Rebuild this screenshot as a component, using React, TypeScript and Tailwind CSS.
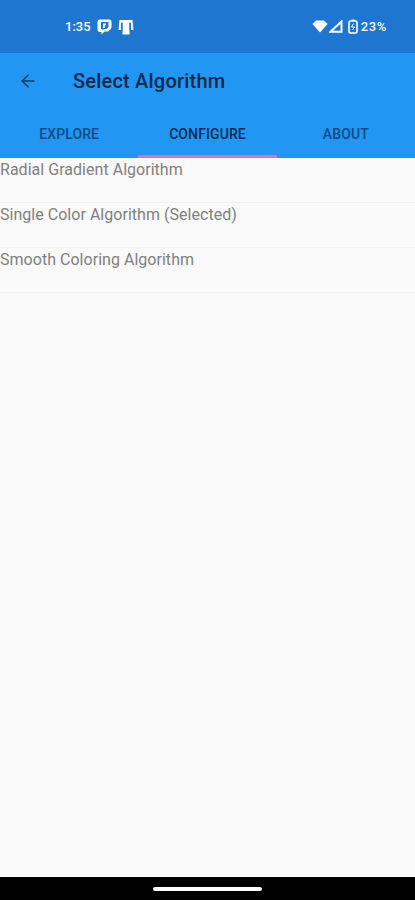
import { ArrowLeft } from "lucide-react";

const algorithms = [
  "Radial Gradient Algorithm",
  "Single Color Algorithm (Selected)",
  "Smooth Coloring Algorithm",
];

function StatusBar() {
  return (
    <div className="h-[53px] shrink-0 bg-[#1e76d0] flex items-center justify-between pl-[65px] pr-[28px] text-white">
      <div className="flex items-center">
        <span className="text-[13px] font-medium w-[32px]">1:35</span>
        {/* chat app icon */}
        <svg width="15" height="16" viewBox="0 0 15 16">
          <path d="M3 0.500h9a2.500 2.500 0 0 1 2.500 2.500v5a3 3 0 0 1-1 2.200l-2.500 2.300H7.500L4.500 15.500V13H3a2.500 2.500 0 0 1-2.500-2.500V3A2.500 2.500 0 0 1 3 0.500z" fill="white" />
          <path d="M4 3h7.500v5l-2 2H7l-1.500 1.200V10H4z" fill="#1e76d0" />
          <path d="M6 4.500h3v1.800H7.800V9H6z" fill="white" />
        </svg>
        {/* store icon */}
        <svg width="16" height="16" viewBox="0 0 16 16" className="ml-[6px]">
          <path d="M1.500 1h13l1 10H13V4H3v7H0.500z" fill="white" />
          <rect x="4.500" y="3.500" width="7" height="12" fill="white" />
          <rect x="3.500" y="3.500" width="1" height="8" fill="#1e76d0" />
          <rect x="11.500" y="3.500" width="1" height="8" fill="#1e76d0" />
        </svg>
      </div>
      <div className="flex items-center">
        <svg width="16" height="13" viewBox="0 0 16 13">
          <path d="M0.500 4L4 0.500h8L15.500 4 8 12.500z" fill="white" />
        </svg>
        <svg width="14" height="13" viewBox="0 0 14 13" className="ml-[1px]">
          <path d="M1.500 11.800L12.500 1.500v10.300z" fill="none" stroke="white" strokeWidth="2" />
        </svg>
        <svg width="10" height="15" viewBox="0 0 10 15" className="ml-[5px]">
          <rect x="1" y="2" width="8" height="12" rx="1.500" fill="none" stroke="white" strokeWidth="1.600" />
          <rect x="3.500" y="0.500" width="3" height="1.500" fill="white" />
          <path d="M5.500 4.500L3.500 8h3l-2 3" fill="none" stroke="white" strokeWidth="1" />
        </svg>
        <span className="text-[13px] font-medium tracking-[0.6px] ml-[3px]">23%</span>
      </div>
    </div>
  );
}

function Tab({ label, active }: { label: string; active?: boolean }) {
  return (
    <div
      className={`flex-1 h-full flex items-center justify-center text-[14px] font-medium tracking-[0.1px] border-b-[3px] ${
        active ? "border-[#ee6fa4] text-[#0b2a4d]" : "border-transparent text-[#0f4a85]"
      }`}
    >
      {label}
    </div>
  );
}

export default function App() {
  return (
    <div className="w-[415px] h-[900px] flex flex-col bg-[#fafafa] font-['Roboto',sans-serif] overflow-hidden">
      <StatusBar />
      <div className="bg-[#2196f3] h-[105px] flex flex-col shrink-0">
        <div className="h-[56px] flex items-center pl-[18px]">
          <ArrowLeft size={20} strokeWidth={1.8} className="text-[#0d3a66]" />
          <span className="ml-[35px] text-[20px] tracking-[0.2px] font-medium text-[#0b2a4d] mb-[1px]">Select Algorithm</span>
        </div>
        <div className="flex-1 flex pt-[4px]">
          <Tab label="EXPLORE" />
          <Tab label="CONFIGURE" active />
          <Tab label="ABOUT" />
        </div>
      </div>
      <div className="flex-1">
        {algorithms.map((name) => (
          <div key={name} className="h-[45px] border-b border-[#f0f0f0] text-[16px] tracking-[0.03px] leading-[24px] text-[#808080]">
            {name}
          </div>
        ))}
      </div>
      <div className="h-[23px] bg-black flex justify-center pt-[10px] shrink-0">
        <div className="w-[109px] h-[4px] rounded-full bg-white" />
      </div>
    </div>
  );
}
